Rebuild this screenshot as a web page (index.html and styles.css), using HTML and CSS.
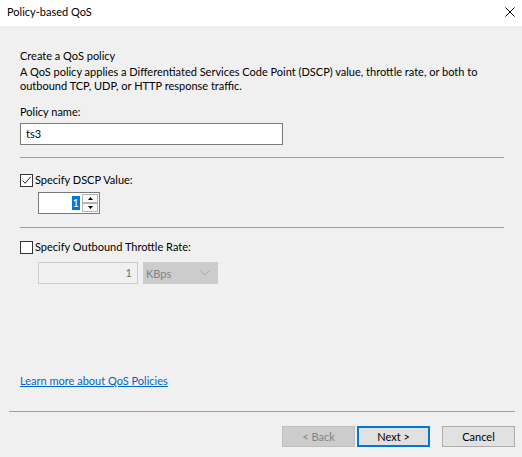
FILE: index.html
```html
<!DOCTYPE html>
<html>
<head>
<meta charset="utf-8">
<link rel="stylesheet" href="styles.css">
</head>
<body>
<div class="window">
  <div class="titlebar">
    <span class="title">Policy-based QoS</span>
    <svg class="close" width="10" height="10" viewBox="0 0 10 10"><path d="M0.5 0.5 L9.5 9.5 M9.5 0.5 L0.5 9.5" stroke="#000" stroke-width="1" fill="none"/></svg>
  </div>
  <div class="body">
    <div class="main">
      <p class="heading">Create a QoS policy</p>
      <p class="desc">A QoS policy applies a Differentiated Services Code Point (DSCP) value, throttle rate, or both to<br>outbound TCP, UDP, or HTTP response traffic.</p>
      <div class="field-label">Policy name:</div>
      <div class="textbox">ts3</div>
      <div class="sep sep-a"></div>
      <div class="check check-a">
        <span class="box"><svg width="11" height="11" viewBox="0 0 11 11"><path d="M1.5 5.5 L4.2 8.3 L9.6 1.8" stroke="#222" stroke-width="1" fill="none"/></svg></span>
        <span>Specify DSCP Value:</span>
      </div>
      <div class="spinner">
        <div class="spin-input"><span class="sel">1</span></div>
        <div class="spin-btns">
          <div class="spin-btn"><svg width="5" height="3" viewBox="0 0 5 3"><path d="M2.5 0 L5 3 L0 3 Z" fill="#000"/></svg></div>
          <div class="spin-btn"><svg width="5" height="3" viewBox="0 0 5 3"><path d="M0 0 L5 0 L2.5 3 Z" fill="#000"/></svg></div>
        </div>
      </div>
      <div class="sep sep-b"></div>
      <div class="check check-b">
        <span class="box"></span>
        <span>Specify Outbound Throttle Rate:</span>
      </div>
      <div class="throttle">
        <div class="num-disabled">1</div>
        <div class="select-disabled"><span>KBps</span><svg width="10" height="6" viewBox="0 0 10 6"><path d="M0.5 0.5 L5 5 L9.5 0.5" stroke="#a8a8a8" stroke-width="1" fill="none"/></svg></div>
      </div>
      <a class="link" href="#">Learn more about QoS Policies</a>
    </div>
    <div class="footer-sep"></div>
    <div class="buttons">
      <div class="btn btn-disabled">&lt; Back</div>
      <div class="btn btn-default">Next &gt;</div>
      <div class="btn btn-cancel">Cancel</div>
    </div>
  </div>
</div>
</body>
</html>
```
FILE: styles.css
```css
* { box-sizing: border-box; }
html, body { margin: 0; padding: 0; }
body {
  width: 522px;
  height: 457px;
  overflow: hidden;
  font-family: "Lato", "Roboto", sans-serif;
  font-size: 11px;
  color: #000;
  background: #f0f0f0;
}
.window { width: 522px; height: 457px; display: flex; flex-direction: column; }
.titlebar {
  height: 26px;
  background: #fff;
  display: flex;
  align-items: center;
  justify-content: space-between;
  padding: 0 7px 2px 7px;
  line-height: 16px;
}
.body { flex: 1; background: #f0f0f0; }
.main { padding: 22px 18px 0 20px; }
p { margin: 0; }
.heading { line-height: 16px; }
.desc { margin-top: 1px; line-height: 14px; white-space: nowrap; }
.field-label { margin-top: 11px; line-height: 16px; }
.textbox {
  margin-top: 3px;
  width: 263px;
  height: 22px;
  border: 1px solid #7a7a7a;
  background: #fff;
  padding: 0 5px;
  line-height: 20px;
}
.sep { border-top: 1px solid #a0a0a0; height: 0; }
.sep-a { margin-top: 12px; }
.sep-b { margin-top: 13px; }
.check { display: flex; align-items: center; height: 16px; line-height: 16px; }
.check-a { margin-top: 14px; }
.check-b { margin-top: 11px; }
.box {
  width: 13px; height: 13px;
  border: 1px solid #333;
  background: #fff;
  margin-right: 2px;
  display: flex; align-items: center; justify-content: center;
}
.spinner {
  margin-top: 4px; margin-left: 18px;
  display: flex; height: 22px; width: 62px;
  border: 1px solid #7a7a7a;
  background: #fff;
}
.spin-input {
  flex: 1;
  display: flex; justify-content: flex-end; align-items: center;
  padding-right: 2px;
}
.sel { background: #0078d7; color: #fff; line-height: 14px; padding: 0 1px; }
.spin-btns {
  width: 17px;
  display: flex; flex-direction: column; gap: 0;
  padding: 1px 1px 1px 0;
}
.spin-btn {
  flex: 1;
  border: 1px solid #b4b4b4;
  background: #fafafa;
  display: flex; align-items: center; justify-content: center;
}
.throttle { margin-top: 7px; margin-left: 18px; display: flex; gap: 5px; height: 22px; }
.num-disabled {
  width: 100px; height: 22px;
  border: 1px solid #cccccc;
  background: #f0f0f0;
  color: #6d6d6d;
  text-align: right;
  padding-right: 5px;
  line-height: 20px;
}
.select-disabled {
  width: 75px; height: 22px;
  background: #cccccc;
  border: 1px solid #cccccc;
  color: #838383;
  display: flex; align-items: center; justify-content: space-between;
  padding: 0 7px 0 2px;
}
.link {
  display: inline-block;
  margin-top: 89px;
  color: #0066cc;
  text-decoration: underline;
  line-height: 16px;
}
.footer-sep { margin: 22px 7px 0 9px; border-top: 1px solid #a0a0a0; }
.buttons { display: flex; justify-content: flex-end; padding: 14px 7px 0 0; }
.btn {
  width: 73px; height: 21px;
  background: #e1e1e1;
  border: 1px solid #adadad;
  display: flex; align-items: center; justify-content: center;
  line-height: 16px;
}
.btn-disabled { background: #cccccc; border-color: #bfbfbf; color: #838383; }
.btn-default { margin-left: 2px; border: 2px solid #0078d7; }
.btn-cancel { margin-left: 12px; }
```
